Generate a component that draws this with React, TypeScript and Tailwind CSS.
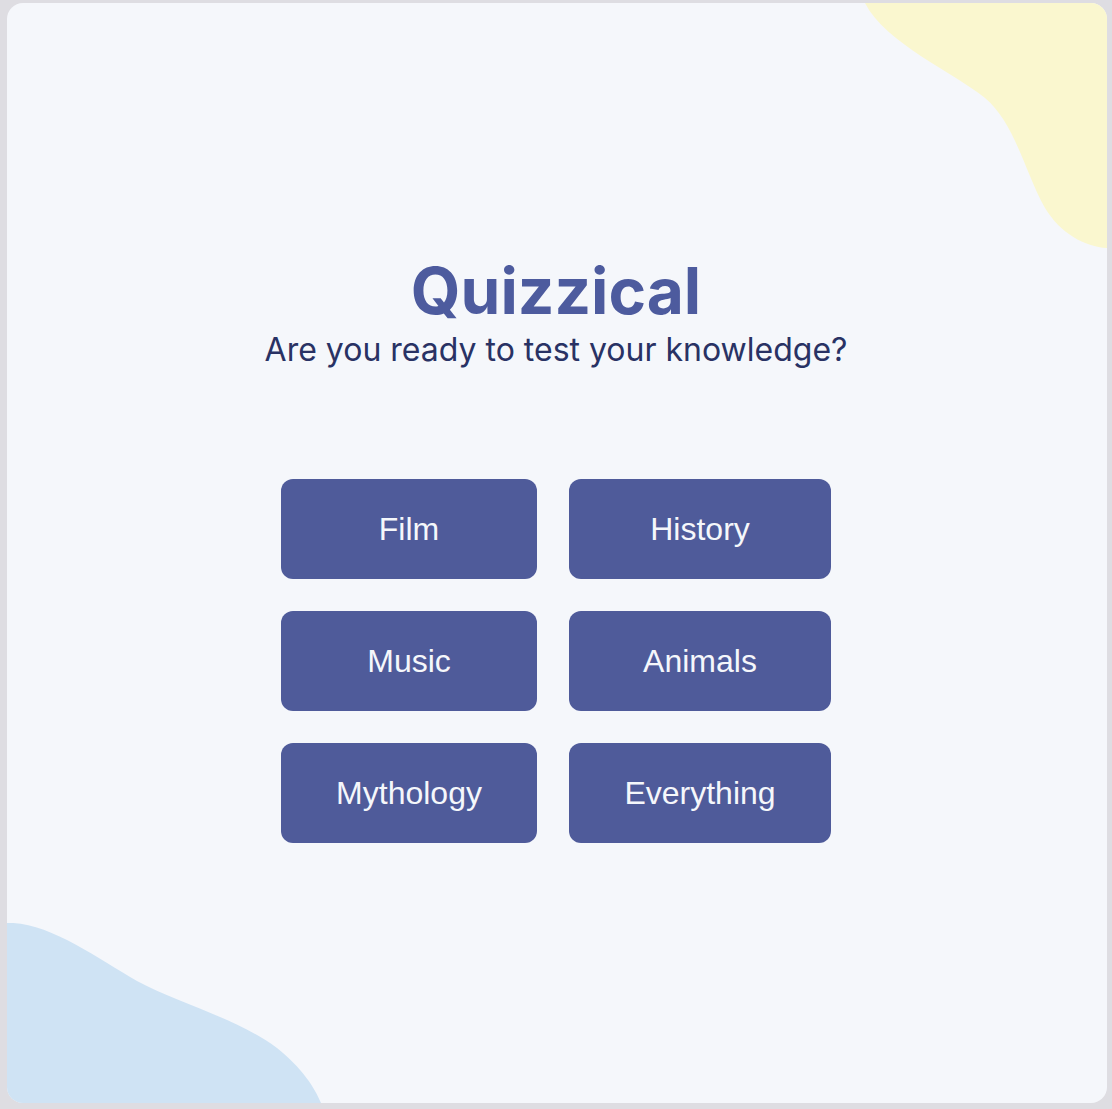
const CATEGORIES = ["Film", "History", "Music", "Animals", "Mythology", "Everything"];

export default function App() {
  return (
    <div className="min-h-[1109px] w-full bg-[#dedde2] pl-[7px] pt-[3px]">
      <main className="relative flex h-[1100px] w-[1100px] flex-col items-center justify-center overflow-hidden rounded-2xl bg-[#f5f7fb] pb-[4px] pr-[2px]">
        {/* decorative blobs */}
        <svg
          className="absolute right-0 top-0"
          width="242"
          height="245"
          viewBox="0 0 242 245"
          aria-hidden="true"
        >
          <path
            d="M0 0 C20 40 90 70 120 95 C150 120 160 170 180 205 C195 230 220 244 242 245 L242 0 Z"
            fill="#faf7cf"
          />
        </svg>
        <svg
          className="absolute bottom-0 left-0"
          width="314"
          height="180"
          viewBox="0 0 314 180"
          aria-hidden="true"
        >
          <path
            d="M0 0 C40 -2 90 35 130 58 C170 80 230 95 270 125 C295 145 308 165 314 180 L0 180 Z"
            fill="#cfe3f4"
          />
        </svg>

        <div className="relative flex flex-col items-center">
          <h1 className="font-['Inter',sans-serif] text-[64px] font-bold leading-[64px] text-[#4d5b9e]">
            Quizzical
          </h1>
          <p className="mt-[7px] font-['Inter',sans-serif] text-[32px] leading-[40px] text-[#293264]">
            Are you ready to test your knowledge?
          </p>

          <div className="mt-[109px] grid grid-cols-[256px_262px] gap-8">
            {CATEGORIES.map((c) => (
              <button
                key={c}
                type="button"
                className="flex h-[100px] items-center justify-center rounded-xl bg-[#4f5b9a] font-['Liberation_Sans',Arial,sans-serif] text-[32px] text-[#f5f7fb]"
              >
                {c}
              </button>
            ))}
          </div>
        </div>
      </main>
    </div>
  );
}
